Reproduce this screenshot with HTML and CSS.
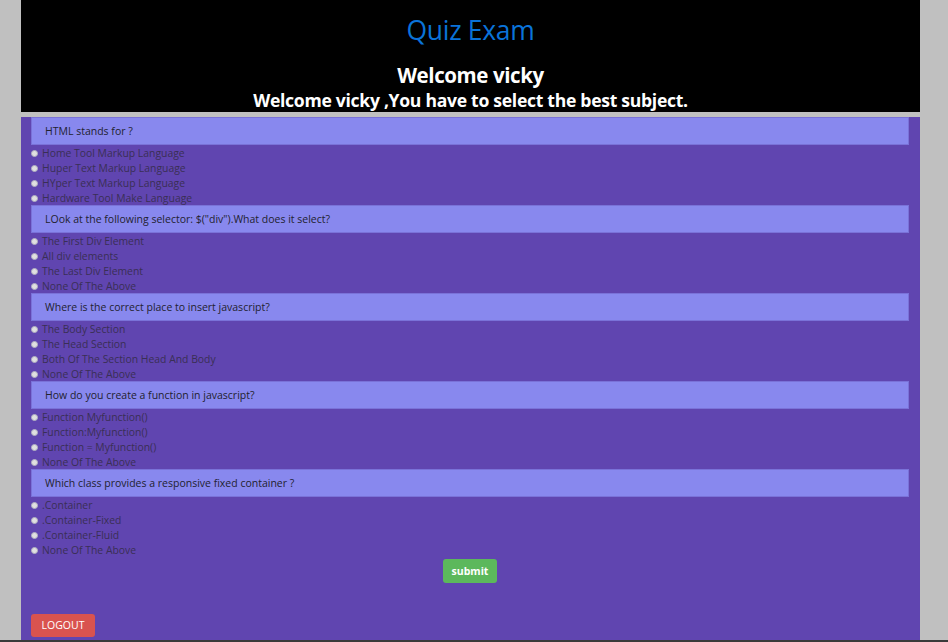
FILE: index.html
```html
<!DOCTYPE html>
<html>
<head>
<meta charset="utf-8">
<title>Quiz Exam</title>
<link rel="stylesheet" href="styles.css">
</head>
<body>
<div class="page">
  <header class="hero">
    <h1 class="title">Quiz Exam</h1>
    <h2 class="welcome">Welcome vicky</h2>
    <h3 class="subtitle">Welcome vicky ,You have to select the best subject.</h3>
  </header>
  <form class="quiz">
    <div class="question">HTML stands for ?</div>
    <ul class="options">
      <li><span class="radio"></span>Home Tool Markup Language</li>
      <li><span class="radio"></span>Huper Text Markup Language</li>
      <li><span class="radio"></span>HYper Text Markup Language</li>
      <li><span class="radio"></span>Hardware Tool Make Language</li>
    </ul>
    <div class="question">LOok at the following selector: $("div").What does it select?</div>
    <ul class="options">
      <li><span class="radio"></span>The First Div Element</li>
      <li><span class="radio"></span>All div elements</li>
      <li><span class="radio"></span>The Last Div Element</li>
      <li><span class="radio"></span>None Of The Above</li>
    </ul>
    <div class="question">Where is the correct place to insert javascript?</div>
    <ul class="options">
      <li><span class="radio"></span>The Body Section</li>
      <li><span class="radio"></span>The Head Section</li>
      <li><span class="radio"></span>Both Of The Section Head And Body</li>
      <li><span class="radio"></span>None Of The Above</li>
    </ul>
    <div class="question">How do you create a function in javascript?</div>
    <ul class="options">
      <li><span class="radio"></span>Function Myfunction()</li>
      <li><span class="radio"></span>Function:Myfunction()</li>
      <li><span class="radio"></span>Function = Myfunction()</li>
      <li><span class="radio"></span>None Of The Above</li>
    </ul>
    <div class="question">Which class provides a responsive fixed container ?</div>
    <ul class="options">
      <li><span class="radio"></span>.Container</li>
      <li><span class="radio"></span>.Container-Fixed</li>
      <li><span class="radio"></span>.Container-Fluid</li>
      <li><span class="radio"></span>None Of The Above</li>
    </ul>
    <div class="actions"><button type="button" class="btn btn-submit">submit</button></div>
    <div class="logout-row"><button type="button" class="btn btn-logout">LOGOUT</button></div>
  </form>
</div>
<div class="taskbar"></div>
</body>
</html>
```

FILE: styles.css
```css
html, body {
  margin: 0;
  padding: 0;
  background: #c0c0c0;
  height: 642px;
  overflow: hidden;
}
body {
  font-family: "Open Sans", "Noto Sans", sans-serif;
  position: relative;
}
.page {
  margin-left: 21px;
  width: 899px;
}
.hero {
  background: #000;
  height: 112px;
  text-align: center;
  display: flex;
  flex-direction: column;
  align-items: center;
}
.title {
  margin: 13px 0 0;
  font-size: 26.5px;
  font-weight: 400;
  color: #0a73d9;
  line-height: 34px;
  letter-spacing: -0.3px;
}
.welcome {
  margin: 15px 0 0;
  font-size: 20.5px;
  font-weight: 700;
  color: #fff;
  line-height: 26px;
  letter-spacing: -0.4px;
}
.subtitle {
  margin: 1px 0 0;
  font-size: 17.6px;
  font-weight: 700;
  color: #fff;
  line-height: 22px;
  letter-spacing: -0.3px;
}
.quiz {
  margin-top: 5px;
  background: #6045b0;
  height: 523px;
  padding: 0 11px 0 10px;
  box-sizing: border-box;
  display: flex;
  flex-direction: column;
}
.question {
  height: 28px;
  box-sizing: border-box;
  background: #8888ee;
  border: 1px solid #7a72d8;
  color: #22222e;
  font-size: 10.5px;
  line-height: 27px;
  padding-left: 13px;
}
.options {
  list-style: none;
  margin: 0 0 0 -10px;
  padding: 0;
}
.options li {
  height: 15px;
  line-height: 15px;
  font-size: 10.4px;
  color: #3a2f55;
  display: flex;
  align-items: center;
  padding: 1px 0 0 10px;
  box-sizing: border-box;
}
.radio {
  width: 7px;
  height: 7px;
  border-radius: 50%;
  background: #e0e0e0;
  border: 1px solid #b0b0c0;
  box-sizing: border-box;
  margin-right: 4px;
  flex: none;
}
.actions {
  display: flex;
  justify-content: center;
  margin-top: 2px;
}
.btn {
  border: none;
  color: #fff;
  font-family: "Open Sans", sans-serif;
  font-size: 10.5px;
  border-radius: 3px;
  padding: 0;
  cursor: pointer;
}
.btn-submit {
  background: #5cb85c;
  width: 54px;
  height: 24px;
  font-weight: 700;
}
.logout-row {
  margin-top: 29px;
}
.btn-logout {
  background: #d9534f;
  width: 64px;
  height: 23px;
}
.taskbar {
  position: absolute;
  left: 0;
  right: 0;
  top: 640px;
  height: 2px;
  background: #3a3a3a;
}
```
